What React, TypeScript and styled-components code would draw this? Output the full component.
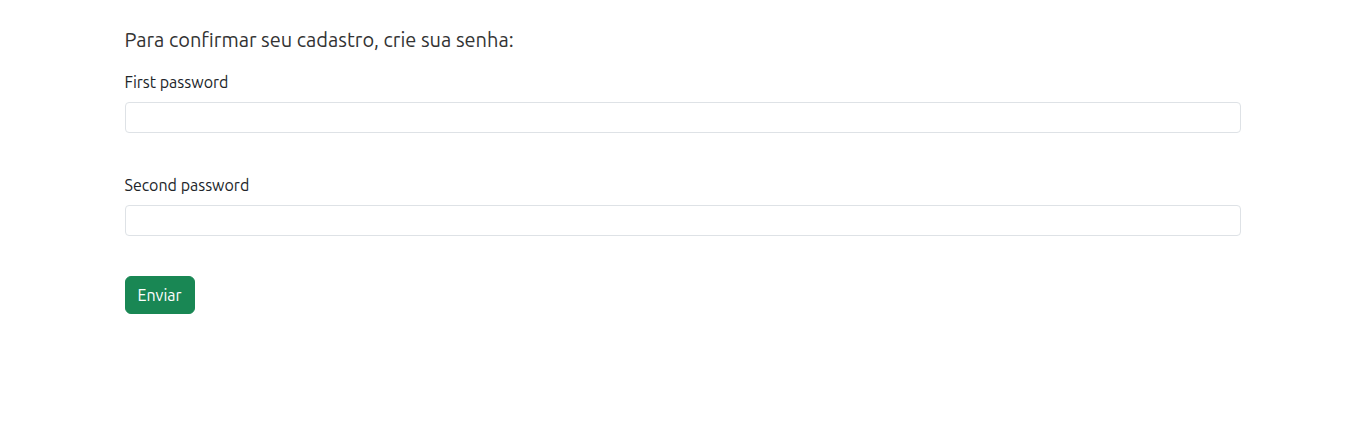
import React from "react";
import styled, { createGlobalStyle } from "styled-components";

const Global = createGlobalStyle`
  * { box-sizing: border-box; }
  body {
    margin: 0;
    font-family: "Ubuntu", "Noto Sans", sans-serif;
    font-size: 16px;
    line-height: 1.5;
    color: #212529;
    background: #fff;
  }
`;

const Container = styled.div`
  max-width: 1140px;
  margin: 0 auto;
  padding: 28px 12px 0;
`;

const Title = styled.h5`
  margin: 0 0 18px;
  font-size: 20px;
  font-weight: 400;
  line-height: 24px;
  color: #333;
`;

const Form = styled.form`
  display: flex;
  flex-direction: column;
  align-items: stretch;
`;

const Field = styled.div`
  display: flex;
  flex-direction: column;
  margin-bottom: 40px;
`;

const Label = styled.label`
  font-size: 16px;
  line-height: 24px;
  margin-bottom: 8px;
`;

const Input = styled.input`
  height: 31px;
  padding: 4px 8px;
  font-size: 14px;
  font-family: inherit;
  border: 1px solid #dee2e6;
  border-radius: 4px;
  outline: none;
  background: #fff;
`;

const Button = styled.button`
  align-self: flex-start;
  height: 38px;
  padding: 6px 12px;
  font-family: inherit;
  font-size: 16px;
  line-height: 24px;
  color: #fff;
  background: #198754;
  border: 1px solid #198754;
  border-radius: 6px;
  cursor: pointer;
`;

export default function App() {
  return (
    <>
      <Global />
      <Container>
        <Title>Para confirmar seu cadastro, crie sua senha:</Title>
        <Form onSubmit={(e) => e.preventDefault()}>
          <Field>
            <Label htmlFor="p1">First password</Label>
            <Input id="p1" type="password" />
          </Field>
          <Field>
            <Label htmlFor="p2">Second password</Label>
            <Input id="p2" type="password" />
          </Field>
          <Button type="submit">Enviar</Button>
        </Form>
      </Container>
    </>
  );
}
